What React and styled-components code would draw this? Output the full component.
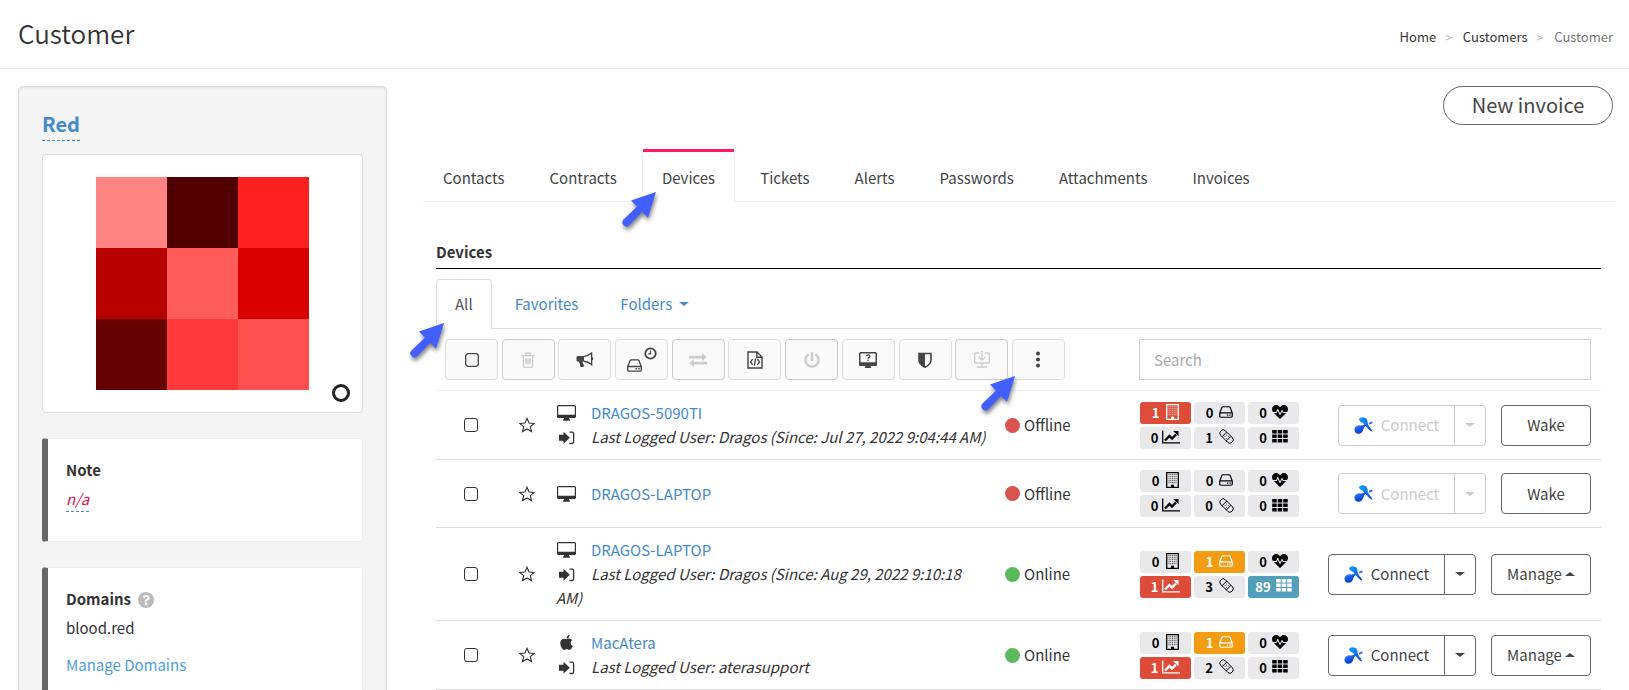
import React from "react";
import styled, { createGlobalStyle, css } from "styled-components";
import { FaApple, FaQuestion, FaHeartbeat, FaPowerOff } from "react-icons/fa";

const GlobalStyle = createGlobalStyle`
  *, *::before, *::after { box-sizing: border-box; }
  body {
    margin: 0;
    background: #fff;
    color: #333;
    font-family: "Noto Sans CJK SC", "Open Sans", sans-serif;
    font-size: 15px;
    line-height: 24px;
  }
  button, input { font: inherit; color: inherit; }
  a { color: #428bca; text-decoration: none; }
  svg { display: block; flex: none; }
`;

const Page = styled.div`
  height: 100vh;
  overflow: hidden;
  display: flex;
  flex-direction: column;
`;

const Header = styled.header`
  flex: none;
  display: flex;
  align-items: center;
  justify-content: space-between;
  height: 69px;
  padding: 0 16px 2px 18px;
  border-bottom: 1px solid #e5e5e5;
`;

const Title = styled.h1`
  margin: 0;
  font-size: 26px;
  font-weight: 350;
  line-height: 36px;
`;

const Crumbs = styled.nav`
  display: flex;
  gap: 9px;
  font-size: 13px;
  padding-top: 8px;
  color: #777;
  a { color: #333; }
  i { color: #bbb; font-style: normal; font-size: 12px; padding-right: 2px; }
`;

const Body = styled.div`
  flex: 1;
  min-height: 0;
  display: grid;
  grid-template-columns: 369px 1fr;
  gap: 36px;
  padding: 17px 16px 0 18px;
`;

const Sidebar = styled.aside`
  display: flex;
  flex-direction: column;
  min-height: 0;
  padding: 23px 23px 0;
  background: #f4f4f4;
  border: 1px solid #dcdcdc;
  border-bottom: 0;
  border-radius: 5px 5px 0 0;
  box-shadow: inset 0 1px 2px rgba(0, 0, 0, 0.08);
`;

const CustomerName = styled.a`
  align-self: flex-start;
  padding-bottom: 2px;
  font-size: 20px;
  font-weight: 700;
  line-height: 28px;
  border-bottom: 1px dashed #428bca;
`;

const PictureCard = styled.div`
  flex: none;
  position: relative;
  margin-top: 13px;
  padding: 22px 0;
  background: #fff;
  border: 1px solid #ddd;
  border-radius: 4px;
`;

const Mosaic = styled.div`
  display: grid;
  grid-template-columns: repeat(3, 71px);
  grid-auto-rows: 71px;
  justify-content: center;
`;

const Tile = styled.span`
  background: ${(p) => p.$color};
`;

const Ring = styled.span`
  position: absolute;
  right: 12px;
  bottom: 10px;
  width: 18px;
  height: 18px;
  border: 3px solid #222;
  border-radius: 50%;
`;

const InfoCard = styled.section`
  flex: ${(p) => (p.$grow ? "1 0 auto" : "none")};
  margin-top: 25px;
  height: ${(p) => (p.$grow ? "auto" : "104px")};
  padding: 19px 18px;
  background: #fff;
  border: 1px solid #eee;
  border-left: 6px solid #666;
  border-radius: 3px;
`;

const CardTitle = styled.h2`
  display: flex;
  align-items: center;
  gap: 7px;
  margin: 0 0 5px;
  font-size: 15px;
  font-weight: 700;
  line-height: 24px;
`;

const HelpDot = styled.span`
  display: grid;
  place-items: center;
  width: 16px;
  height: 16px;
  margin-top: 2px;
  border-radius: 50%;
  background: #bbb;
  color: #fff;
`;

const EmptyNote = styled.a`
  display: inline-block;
  color: #d14;
  font-style: italic;
  border-bottom: 1px dashed #428bca;
`;

const CardText = styled.p`
  margin: 0 0 13px;
`;

const CardLink = styled.a`
  color: #4a9fe0;
`;

const Main = styled.main`
  display: flex;
  flex-direction: column;
  min-width: 0;
`;

const NewInvoice = styled.button`
  align-self: flex-end;
  flex: none;
  width: 170px;
  height: 39px;
  padding: 0 0 2px;
  background: #fff;
  border: 1px solid #666;
  border-radius: 20px;
  font-size: 20px;
  line-height: 30px;
  color: #444;
`;

const Tabs = styled.nav`
  flex: none;
  display: flex;
  gap: 5px;
  height: 53px;
  margin-top: 24px;
  border-bottom: 1px solid #f0f0f0;
`;

const Tab = styled.a`
  position: relative;
  height: 52px;
  padding: 14px 19px 0;
  border: 1px solid transparent;
  border-bottom: 0;
  border-top: 3px solid transparent;
  color: #444;
  ${(p) =>
    p.$active &&
    css`
      height: 53px;
      background: #fff;
      border-color: #f0f0f0;
      border-top: 0;
      padding-top: 17px;
      box-shadow: inset 0 3px #ff1a66;
    `}
`;

const Section = styled.section`
  margin: 38px 12px 0 13px;
`;

const SectionTitle = styled.h2`
  margin: 0;
  height: 29px;
  font-size: 15px;
  font-weight: 700;
  line-height: 24px;
  border-bottom: 1px solid #000;
`;

const SubTabs = styled.nav`
  display: flex;
  height: 50px;
  margin-top: 10px;
  border-bottom: 1px solid #ddd;
`;

const SubTab = styled.a`
  position: relative;
  display: flex;
  align-items: center;
  gap: 7px;
  height: 49px;
  margin-right: 4px;
  padding: 0 18px;
  border: 1px solid transparent;
  border-bottom: 0;
  border-radius: 4px 4px 0 0;
  ${(p) =>
    p.$active &&
    css`
      height: 50px;
      padding-bottom: 2px;
      color: #555;
      background: #fff;
      border-color: #ddd;
    `}
`;

const Caret = styled.span`
  border: 0 solid transparent;
  border-left-width: 5px;
  border-right-width: 5px;
  ${(p) => (p.$up ? "border-bottom" : "border-top")}: 4px solid currentColor;
`;

const Controls = styled.div`
  display: flex;
  align-items: center;
  justify-content: space-between;
  height: 62px;
  padding: 0 10px 0 9px;
  border-bottom: 1px solid #f0f0f0;
`;

const Toolbar = styled.div`
  display: flex;
  justify-content: space-between;
  width: 620px;
`;

const Tool = styled.button`
  position: relative;
  display: flex;
  align-items: center;
  justify-content: center;
  width: 53px;
  height: 41px;
  padding: 0;
  background: #fafafa;
  border: 1px solid #ddd;
  border-radius: 4px;
  color: #444;
  &:disabled { color: #ccc; border-color: #ccc; }
`;

const Search = styled.input`
  width: 452px;
  height: 41px;
  padding: 0 14px;
  background: #fff;
  border: 1px solid #cfcfda;
  border-radius: 0;
  &::placeholder { color: #aaa; opacity: 1; }
`;

const Table = styled.table`
  width: 100%;
  table-layout: fixed;
  border-collapse: separate;
  border-spacing: 0;
`;

const Cell = styled.td`
  height: 68px;
  padding: 10px ${(p) => (p.$center ? 0 : 8)}px;
  border-bottom: 1px solid #ddd;
  vertical-align: middle;
`;

const Check = styled.input.attrs({ type: "checkbox" })`
  appearance: none;
  display: block;
  width: 14px;
  height: 14px;
  margin: 0 auto;
  border: 1px solid #333;
  border-radius: 3px;
  background: #fff;
`;

const StarButton = styled.button`
  display: block;
  margin: 0 auto;
  padding: 0;
  border: 0;
  background: none;
`;

const DeviceLine = styled.div`
  font-style: ${(p) => (p.$user ? "italic" : "normal")};
`;

const LineIcon = styled.span`
  display: inline-flex;
  justify-content: center;
  width: 21px;
  margin-right: 14px;
  vertical-align: -2px;
`;

const Status = styled.span`
  display: flex;
  align-items: center;
  gap: 4px;
  &::before {
    content: "";
    width: 15px;
    height: 15px;
    border-radius: 50%;
    background: ${(p) => (p.$online ? "#5cb85c" : "#d9534f")};
  }
`;

const Badges = styled.div`
  display: grid;
  grid-template-columns: repeat(3, 51px);
  gap: 3px;
`;

const tones = { plain: "#e9e9eb", red: "#dd4b39", orange: "#f39c12", blue: "#539fb9" };

const Badge = styled.span`
  display: flex;
  align-items: center;
  justify-content: center;
  gap: ${(p) => p.$gap}px;
  height: 22px;
  border-radius: 3px;
  background: ${(p) => tones[p.$tone]};
  color: ${(p) => (p.$tone === "plain" ? "#000" : "#fff")};
  font-size: 13px;
  font-weight: 700;
  line-height: 20px;
  svg { margin-bottom: 2px; }
`;

const Actions = styled.div`
  display: flex;
  justify-content: flex-end;
  gap: 15px;
  padding-right: 2px;
`;

const SplitButton = styled.div`
  display: flex;
`;

const Button = styled.button`
  display: flex;
  align-items: center;
  justify-content: center;
  gap: ${(p) => p.$gap || 8}px;
  width: ${(p) => p.$width}px;
  height: 41px;
  padding: 0;
  background: #fff;
  border: 1px solid #666;
  border-radius: 4px;
  color: #444;
  ${SplitButton} &:first-child { border-radius: 4px 0 0 4px; }
  ${SplitButton} &:last-child { border-radius: 0 4px 4px 0; margin-left: -1px; }
  &:disabled { color: #ccc; border-color: #ccc; }
`;

const ArrowSpot = styled.span`
  position: absolute;
  z-index: 2;
  top: ${(p) => p.$top}px;
  left: ${(p) => p.$left}px;
  filter: drop-shadow(1px 3px 2px rgba(0, 0, 0, 0.5));
  pointer-events: none;
`;

function Arrow({ top, left }) {
  return (
    <ArrowSpot $top={top} $left={left}>
      <svg width="35" height="35" viewBox="0 0 35 35" aria-hidden="true">
        <path d="M34 0 L9 8.500 L15 14.500 L1.500 27.500 A4 4 0 0 0 7.500 33 L20 20 L26 25.500 Z" fill="#415fff" />
      </svg>
    </ArrowSpot>
  );
}

function Icon({ w = 16, h = 16, box, children }) {
  return (
    <svg width={w} height={h} viewBox={box || `0 0 ${w} ${h}`} fill="none" stroke="currentColor" aria-hidden="true">
      {children}
    </svg>
  );
}

const SquareIcon = () => (
  <Icon w={14} h={14}><rect x="0.700" y="0.700" width="12.600" height="12.600" rx="2.500" strokeWidth="1.300" /></Icon>
);
const TrashIcon = () => (
  <Icon w={14} h={16}>
    <path d="M0.500 3.500h13M4.500 3.300L5.200 1h3.600l0.700 2.300M2.300 3.500v10.300c0 .9.500 1.500 1.200 1.500h7c.7 0 1.200-.6 1.200-1.500V3.500M5 6.200v6.300M7 6.200v6.300M9 6.200v6.300" strokeWidth="1.300" />
  </Icon>
);
const HornIcon = () => (
  <Icon w={18} h={16}>
    <path d="M0.500 5.200Q0.500 4 1.700 4H8v5.500H6.500l.6 2.300c.3.900 1.100 1.400 1.300 2.200-.9 1.200-3 1.400-4 .5L3.100 9.500H1.700Q0.500 9.500 0.500 8.300z" fill="currentColor" stroke="none" />
    <path d="M8 4.400Q12 4 15.600 1V12.600Q12 9.400 8 9.200M15.600 5.300q1.800 1.500 0 3" strokeWidth="1.400" />
  </Icon>
);
const DriveIcon = ({ w = 15, h = 13 }) => (
  <Icon w={w} h={h} box="0 0 15 13">
    <path d="M0.700 7.700L3 1.600Q3.300 .8 4.200 .8h6.600q.9 0 1.200 .8L14.300 7.700v3.200q0 1.300-1.200 1.300H1.900q-1.200 0-1.200-1.300zM0.700 7.500h13.600" strokeWidth="1.300" />
    <path d="M8.500 9.100h1.500v1.500H8.500zM11.200 9.100h1.500v1.500h-1.500z" fill="currentColor" stroke="none" />
  </Icon>
);
const DriveClockIcon = () => (
  <Icon w={30} h={26}>
    <circle cx="23.500" cy="6.500" r="5.200" strokeWidth="1.800" />
    <path d="M23.500 3.500v3.300h-2.300" strokeWidth="1.300" />
    <path d="M0.700 19.700L3 13.600Q3.300 12.800 4.200 12.800h6.600q.9 0 1.200 .8L14.300 19.700v3.200q0 1.300-1.200 1.300H1.900q-1.200 0-1.200-1.300zM0.700 19.500h13.600" strokeWidth="1.300" />
    <path d="M8.500 21.100h1.500v1.500H8.500zM11.200 21.100h1.500v1.500h-1.500z" fill="currentColor" stroke="none" />
  </Icon>
);
const SwapIcon = () => (
  <Icon w={18} h={14}>
    <path d="M0 2.800h13V0L17.700 4.100 13 8.200V5.400H0zM18 11.500H5V14L.3 10 5 6v2.800h13z" fill="currentColor" stroke="none" />
  </Icon>
);
const FileCodeIcon = () => (
  <Icon w={16} h={18}>
    <path d="M1 1h9l5 5v11H1zM9.800 1v5.200H15" strokeWidth="1.400" />
    <path d="M5.600 8.200L3.500 11l2.100 2.800M10.400 8.200L12.500 11l-2.100 2.800M8.700 7.500L7.300 14.500" strokeWidth="1.300" />
  </Icon>
);
const MonitorHelpIcon = () => (
  <Icon w={18} h={16}>
    <path d="M1.500 0h15Q18 0 18 1.500v11q0 1.500-1.500 1.500H11.500l.8 2H5.700l.8-2H1.500Q0 14 0 12.500v-11Q0 0 1.500 0zM1.500 1.500v8.700h15V1.500z" fill="currentColor" fillRule="evenodd" stroke="none" />
    <path d="M7.300 4.300q.1-1.500 1.800-1.500t1.700 1.400q0 .8-.9 1.200t-.9 1.300M9 7.600v1.400" strokeWidth="1.300" />
  </Icon>
);
const ShieldIcon = () => (
  <Icon w={14} h={16}>
    <path d="M1 1.500H13V8q0 4.500-6 7.200Q1 12.500 1 8z" strokeWidth="1.600" />
    <path d="M1 1.500H7v13.700Q1 12.500 1 8z" fill="currentColor" stroke="none" />
  </Icon>
);
const MonitorDownIcon = () => (
  <Icon w={16} h={17}>
    <path d="M5 2H2Q.7 2 .7 3.300v7.400Q.7 12 2 12h12q1.300 0 1.300-1.300V3.300Q15.300 2 14 2h-3M8 0v9M4.800 6L8 9.200 11.200 6M8 12v3M3 16h10" strokeWidth="1.300" />
  </Icon>
);
const DotsIcon = () => (
  <Icon w={4} h={18}>
    <g fill="currentColor" stroke="none"><circle cx="2" cy="2.500" r="2" /><circle cx="2" cy="8.500" r="2" /><circle cx="2" cy="14.500" r="2" /></g>
  </Icon>
);
const StarIcon = () => (
  <Icon w={16} h={16}>
    <path d="M8 1.300l2 4.700 5.200.4-3.900 3.300 1.200 4.900L8 12l-4.500 2.600 1.200-4.900L.8 6.400 6 6z" strokeWidth="1.100" />
  </Icon>
);
const DesktopIcon = () => (
  <Icon w={19} h={16}>
    <path d="M1.500 0h16Q19 0 19 1.500v10q0 1.500-1.500 1.500H12q0 1.200.9 1.800v1H6.100v-1Q7 14.200 7 13H1.500Q0 13 0 11.500v-10Q0 0 1.500 0zM1.200 1.200v8.500h16.600V1.200z" fill="currentColor" fillRule="evenodd" stroke="none" />
  </Icon>
);
const SignInIcon = () => (
  <Icon w={16} h={14}>
    <path d="M0 3.800h4.500V.8L10.800 6.800 4.500 12.800V9.800H0z" fill="currentColor" stroke="none" />
    <path d="M10.500 1.200h2.700q1.400 0 1.400 1.400v8.500q0 1.400-1.400 1.400h-2.700" strokeWidth="1.300" />
  </Icon>
);
const BuildingIcon = () => (
  <Icon w={13} h={16}>
    <path d="M.7 .7h11.600v14.600H.7z" strokeWidth="1.300" />
    <path d="M2.500 2.700h8M2.500 4.700h8M2.500 6.700h8M2.500 8.700h8M2.500 10.700h8" strokeWidth="1" strokeDasharray="1 .75" opacity="0.750" />
    <path d="M5 12.700h3V15H5z" fill="currentColor" stroke="none" />
  </Icon>
);
const ChartIcon = () => (
  <Icon w={18} h={14}>
    <path d="M.7 .5v12.300H18" strokeWidth="1.300" />
    <path d="M3 10.500l4.500-4.500 2.500 2.500 4-4" strokeWidth="2.400" />
    <path d="M11.200 1h5.300v5.300z" fill="currentColor" stroke="none" />
  </Icon>
);
const BandageIcon = () => (
  <Icon w={15} h={15} box="0 0 16 16">
    <g transform="rotate(45 8 8)" strokeWidth="1"><rect x="-.5" y="4.500" width="17" height="7" rx="3.300" /><path d="M4.800 4.500v7M11.200 4.500v7" /></g>
    <path d="M8 6v.9M6 8h.9M9.500 8h.9M8 9.500v.9" strokeWidth="0.800" />
  </Icon>
);
const GridIcon = () => (
  <Icon w={16} h={13}>
    <path d="M.2 0H4.700V3.600H.2zM5.700 0h4.500v3.600H5.700zM11.200 0h4.500v3.600h-4.500zM.2 4.500H4.700V8.100H.2zM5.700 4.500h4.500v3.600H5.700zM11.200 4.500h4.500v3.600h-4.500zM.2 9H4.700v3.600H.2zM5.700 9h4.500v3.600H5.700zM11.200 9h4.500v3.600h-4.500z" fill="currentColor" stroke="none" />
  </Icon>
);
const HeartIcon = () => <FaHeartbeat size={16} />;
const BadgeDriveIcon = () => <DriveIcon w={14} h={12} />;

const ConnectLogo = () => (
  <svg width="19" height="17" viewBox="0 0 19 17" aria-hidden="true">
    <defs>
      <linearGradient id="blobTop" x1="0" y1="0" x2="1" y2="1"><stop offset="0" stopColor="#0aa5ff" /><stop offset="1" stopColor="#1747d8" /></linearGradient>
      <linearGradient id="blobLow" x1="0" y1="0" x2="0.600" y2="1"><stop offset="0" stopColor="#9cc8ff" /><stop offset="0.450" stopColor="#1d5ff0" /><stop offset="1" stopColor="#0733b8" /></linearGradient>
    </defs>
    <path d="M5 2.400C5.500 .3 8.500-.3 11 .8s2.700 3.200 2.600 4.700c0 1.600 1 3.300 2.200 4.700s2.200 2.800 2.600 4.300c-2.700-.2-4.300-2.700-5.700-4.200S9.800 7.800 9.400 6.300C9 5 6.200 5.600 5 2.400z" fill="url(#blobTop)" />
    <path d="M.6 11.500C1.300 9 3.600 8.200 6.200 8.400c2.800.1 5-.8 7.300-2.300-.8 2.300-3.400 3.600-4 5.800-.5 2.600-2.500 4.800-5.200 4.900S-.1 14.200.6 11.500z" fill="url(#blobLow)" />
    <ellipse cx="16.700" cy="6" rx="2" ry="1.200" transform="rotate(-22 16.700 6)" fill="#4b6af0" />
  </svg>
);

const mosaic = ["#ff8585", "#500000", "#ff2020", "#b90000", "#ff5c5c", "#da0000", "#670000", "#ff3939", "#ff4f4f"];
const tabs = ["Contacts", "Contracts", "Devices", "Tickets", "Alerts", "Passwords", "Attachments", "Invoices"];
const tools = [
  { label: "Select all", icon: SquareIcon },
  { label: "Delete", icon: TrashIcon, off: true },
  { label: "Announce", icon: HornIcon },
  { label: "Schedule", icon: DriveClockIcon },
  { label: "Transfer", icon: SwapIcon, off: true },
  { label: "Run script", icon: FileCodeIcon },
  { label: "Power", icon: () => <FaPowerOff size={16} />, off: true },
  { label: "Remote help", icon: MonitorHelpIcon },
  { label: "Protection", icon: ShieldIcon },
  { label: "Install", icon: MonitorDownIcon, off: true },
  { label: "More", icon: DotsIcon, arrow: true },
];
const badgeIcons = [
  { icon: BuildingIcon, gap: 7 },
  { icon: BadgeDriveIcon, gap: 6 },
  { icon: HeartIcon, gap: 5 },
  { icon: ChartIcon, gap: 4 },
  { icon: BandageIcon, gap: 6 },
  { icon: GridIcon, gap: 5 },
];
const devices = [
  { name: "DRAGOS-5090TI", user: "Dragos (Since: Jul 27, 2022 9:04:44 AM)", counts: [1, 0, 0, 0, 1, 0], tones: { 0: "red" } },
  { name: "DRAGOS-LAPTOP", counts: [0, 0, 0, 0, 0, 0], tones: {} },
  { name: "DRAGOS-LAPTOP", user: "Dragos (Since: Aug 29, 2022 9:10:18 AM)", online: true, counts: [0, 1, 0, 1, 3, 89], tones: { 1: "orange", 3: "red", 5: "blue" } },
  { name: "MacAtera", mac: true, user: "aterasupport", online: true, counts: [0, 1, 0, 1, 2, 0], tones: { 1: "orange", 3: "red" } },
];

function DeviceRow({ device }) {
  const { name, mac, user, online, counts, tones: rowTones } = device;
  return (
    <tr>
      <Cell $center><Check aria-label={`Select ${name}`} /></Cell>
      <Cell $center><StarButton aria-label={`Favorite ${name}`}><StarIcon /></StarButton></Cell>
      <Cell>
        <DeviceLine>
          <LineIcon>{mac ? <FaApple size={17} /> : <DesktopIcon />}</LineIcon>
          <a href="#device">{name}</a>
        </DeviceLine>
        {user && (
          <DeviceLine $user>
            <LineIcon><SignInIcon /></LineIcon>
            Last Logged User: {user}
          </DeviceLine>
        )}
      </Cell>
      <Cell><Status $online={online}>{online ? "Online" : "Offline"}</Status></Cell>
      <Cell>
        <Badges>
          {badgeIcons.map(({ icon: BadgeIcon, gap }, i) => (
            <Badge key={i} $gap={gap} $tone={rowTones[i] || "plain"}>{counts[i]}<BadgeIcon /></Badge>
          ))}
        </Badges>
      </Cell>
      <Cell>
        <Actions>
          <SplitButton>
            <Button $width={117} disabled={!online}><ConnectLogo />Connect</Button>
            <Button $width={32} disabled={!online} aria-label="Connect options"><Caret /></Button>
          </SplitButton>
          {online ? <Button $width={100} $gap={3}>Manage<Caret $up /></Button> : <Button $width={90}>Wake</Button>}
        </Actions>
      </Cell>
    </tr>
  );
}

export default function App() {
  return (
    <Page>
      <GlobalStyle />
      <Header>
        <Title>Customer</Title>
        <Crumbs aria-label="Breadcrumb">
          <a href="#home">Home</a><i>&gt;</i>
          <a href="#customers">Customers</a><i>&gt;</i>
          <span>Customer</span>
        </Crumbs>
      </Header>
      <Body>
        <Sidebar>
          <CustomerName href="#name">Red</CustomerName>
          <PictureCard>
            <Mosaic>{mosaic.map((color) => <Tile key={color} $color={color} />)}</Mosaic>
            <Ring />
          </PictureCard>
          <InfoCard>
            <CardTitle>Note</CardTitle>
            <EmptyNote href="#note">n/a</EmptyNote>
          </InfoCard>
          <InfoCard $grow>
            <CardTitle>Domains <HelpDot><FaQuestion size={10} /></HelpDot></CardTitle>
            <CardText>blood.red</CardText>
            <CardLink href="#domains">Manage Domains</CardLink>
          </InfoCard>
        </Sidebar>
        <Main>
          <NewInvoice>New invoice</NewInvoice>
          <Tabs>
            {tabs.map((tab) => (
              <Tab key={tab} href={`#${tab}`} $active={tab === "Devices"}>
                {tab}
                {tab === "Devices" && <Arrow top={43} left={-21} />}
              </Tab>
            ))}
          </Tabs>
          <Section>
            <SectionTitle>Devices</SectionTitle>
            <SubTabs>
              <SubTab href="#all" $active>All<Arrow top={43} left={-27} /></SubTab>
              <SubTab href="#favorites">Favorites</SubTab>
              <SubTab href="#folders">Folders<Caret /></SubTab>
            </SubTabs>
            <Controls>
              <Toolbar>
                {tools.map(({ label, icon: ToolIcon, off, arrow }) => (
                  <Tool key={label} aria-label={label} disabled={off}>
                    <ToolIcon />
                    {arrow && <Arrow top={36} left={-32} />}
                  </Tool>
                ))}
              </Toolbar>
              <Search type="search" placeholder="Search" aria-label="Search" />
            </Controls>
            <Table>
              <colgroup>
                <col width="70" /><col width="42" /><col /><col width="135" /><col width="175" /><col width="294" />
              </colgroup>
              <tbody>{devices.map((device, i) => <DeviceRow key={i} device={device} />)}</tbody>
            </Table>
          </Section>
        </Main>
      </Body>
    </Page>
  );
}
